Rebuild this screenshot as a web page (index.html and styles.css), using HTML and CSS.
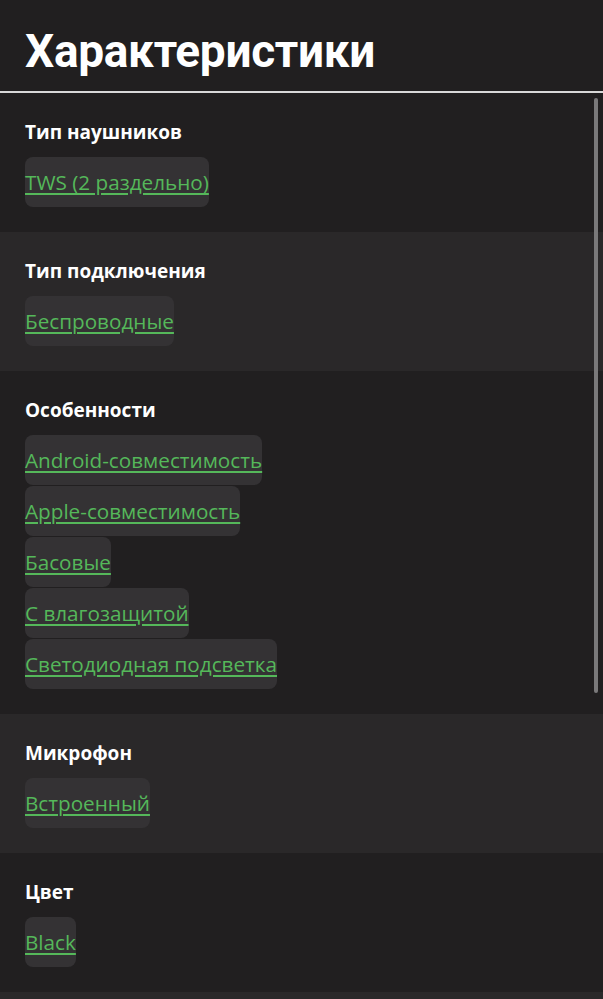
FILE: index.html
```html
<!DOCTYPE html>
<html lang="ru">
<head>
<meta charset="utf-8">
<link rel="stylesheet" href="styles.css">
</head>
<body>
<div class="page">
  <header class="header"><h1 class="title">Характеристики</h1></header>
  <div class="list">
    <section class="group">
      <h2 class="group-title">Тип наушников</h2>
      <div class="chips"><a class="chip" href="#">TWS (2 раздельно)</a></div>
    </section>
    <section class="group alt">
      <h2 class="group-title">Тип подключения</h2>
      <div class="chips"><a class="chip" href="#">Беспроводные</a></div>
    </section>
    <section class="group">
      <h2 class="group-title">Особенности</h2>
      <div class="chips">
        <a class="chip" href="#">Android-совместимость</a>
        <a class="chip" href="#">Apple-совместимость</a>
        <a class="chip" href="#">Басовые</a>
        <a class="chip" href="#">С влагозащитой</a>
        <a class="chip" href="#">Светодиодная подсветка</a>
      </div>
    </section>
    <section class="group alt">
      <h2 class="group-title">Микрофон</h2>
      <div class="chips"><a class="chip" href="#">Встроенный</a></div>
    </section>
    <section class="group">
      <h2 class="group-title">Цвет</h2>
      <div class="chips"><a class="chip" href="#">Black</a></div>
    </section>
    <section class="group alt"></section>
    <div class="scrollbar"></div>
  </div>
</div>
</body>
</html>
```
FILE: styles.css
```css
* { box-sizing: border-box; }
html, body { margin: 0; padding: 0; background: #211f20; }
body { font-family: "Open Sans", "Noto Sans", sans-serif; color: #fff; overflow: hidden; height: 999px; }
.page { width: 603px; }
.header { height: 93px; border-bottom: 2px solid #d8d8d8; padding: 0 25px; }
.title { margin: 0; padding-top: 23px; font-family: Roboto, "Open Sans", sans-serif; font-size: 46px; line-height: 56px; font-weight: 700; letter-spacing: -0.3px; }
.list { position: relative; }
.group { padding: 27px 25px 25px; background: #211f20; }
.group.alt { background: #2a2829; }
.group-title { margin: 0 0 13px; font-size: 19px; line-height: 24px; font-weight: 700; }
.chips { display: flex; flex-direction: column; align-items: flex-start; gap: 1px; }
.chip { display: flex; align-items: center; height: 50px; padding: 0; border-radius: 8px; background: #343234; color: #55b85a; font-size: 20.7px; text-decoration: underline; text-underline-offset: 3px; text-decoration-thickness: 2px; }
.scrollbar { position: absolute; top: 5px; right: 5px; width: 4px; height: 595px; border-radius: 2px; background: #7a797a; }
```
